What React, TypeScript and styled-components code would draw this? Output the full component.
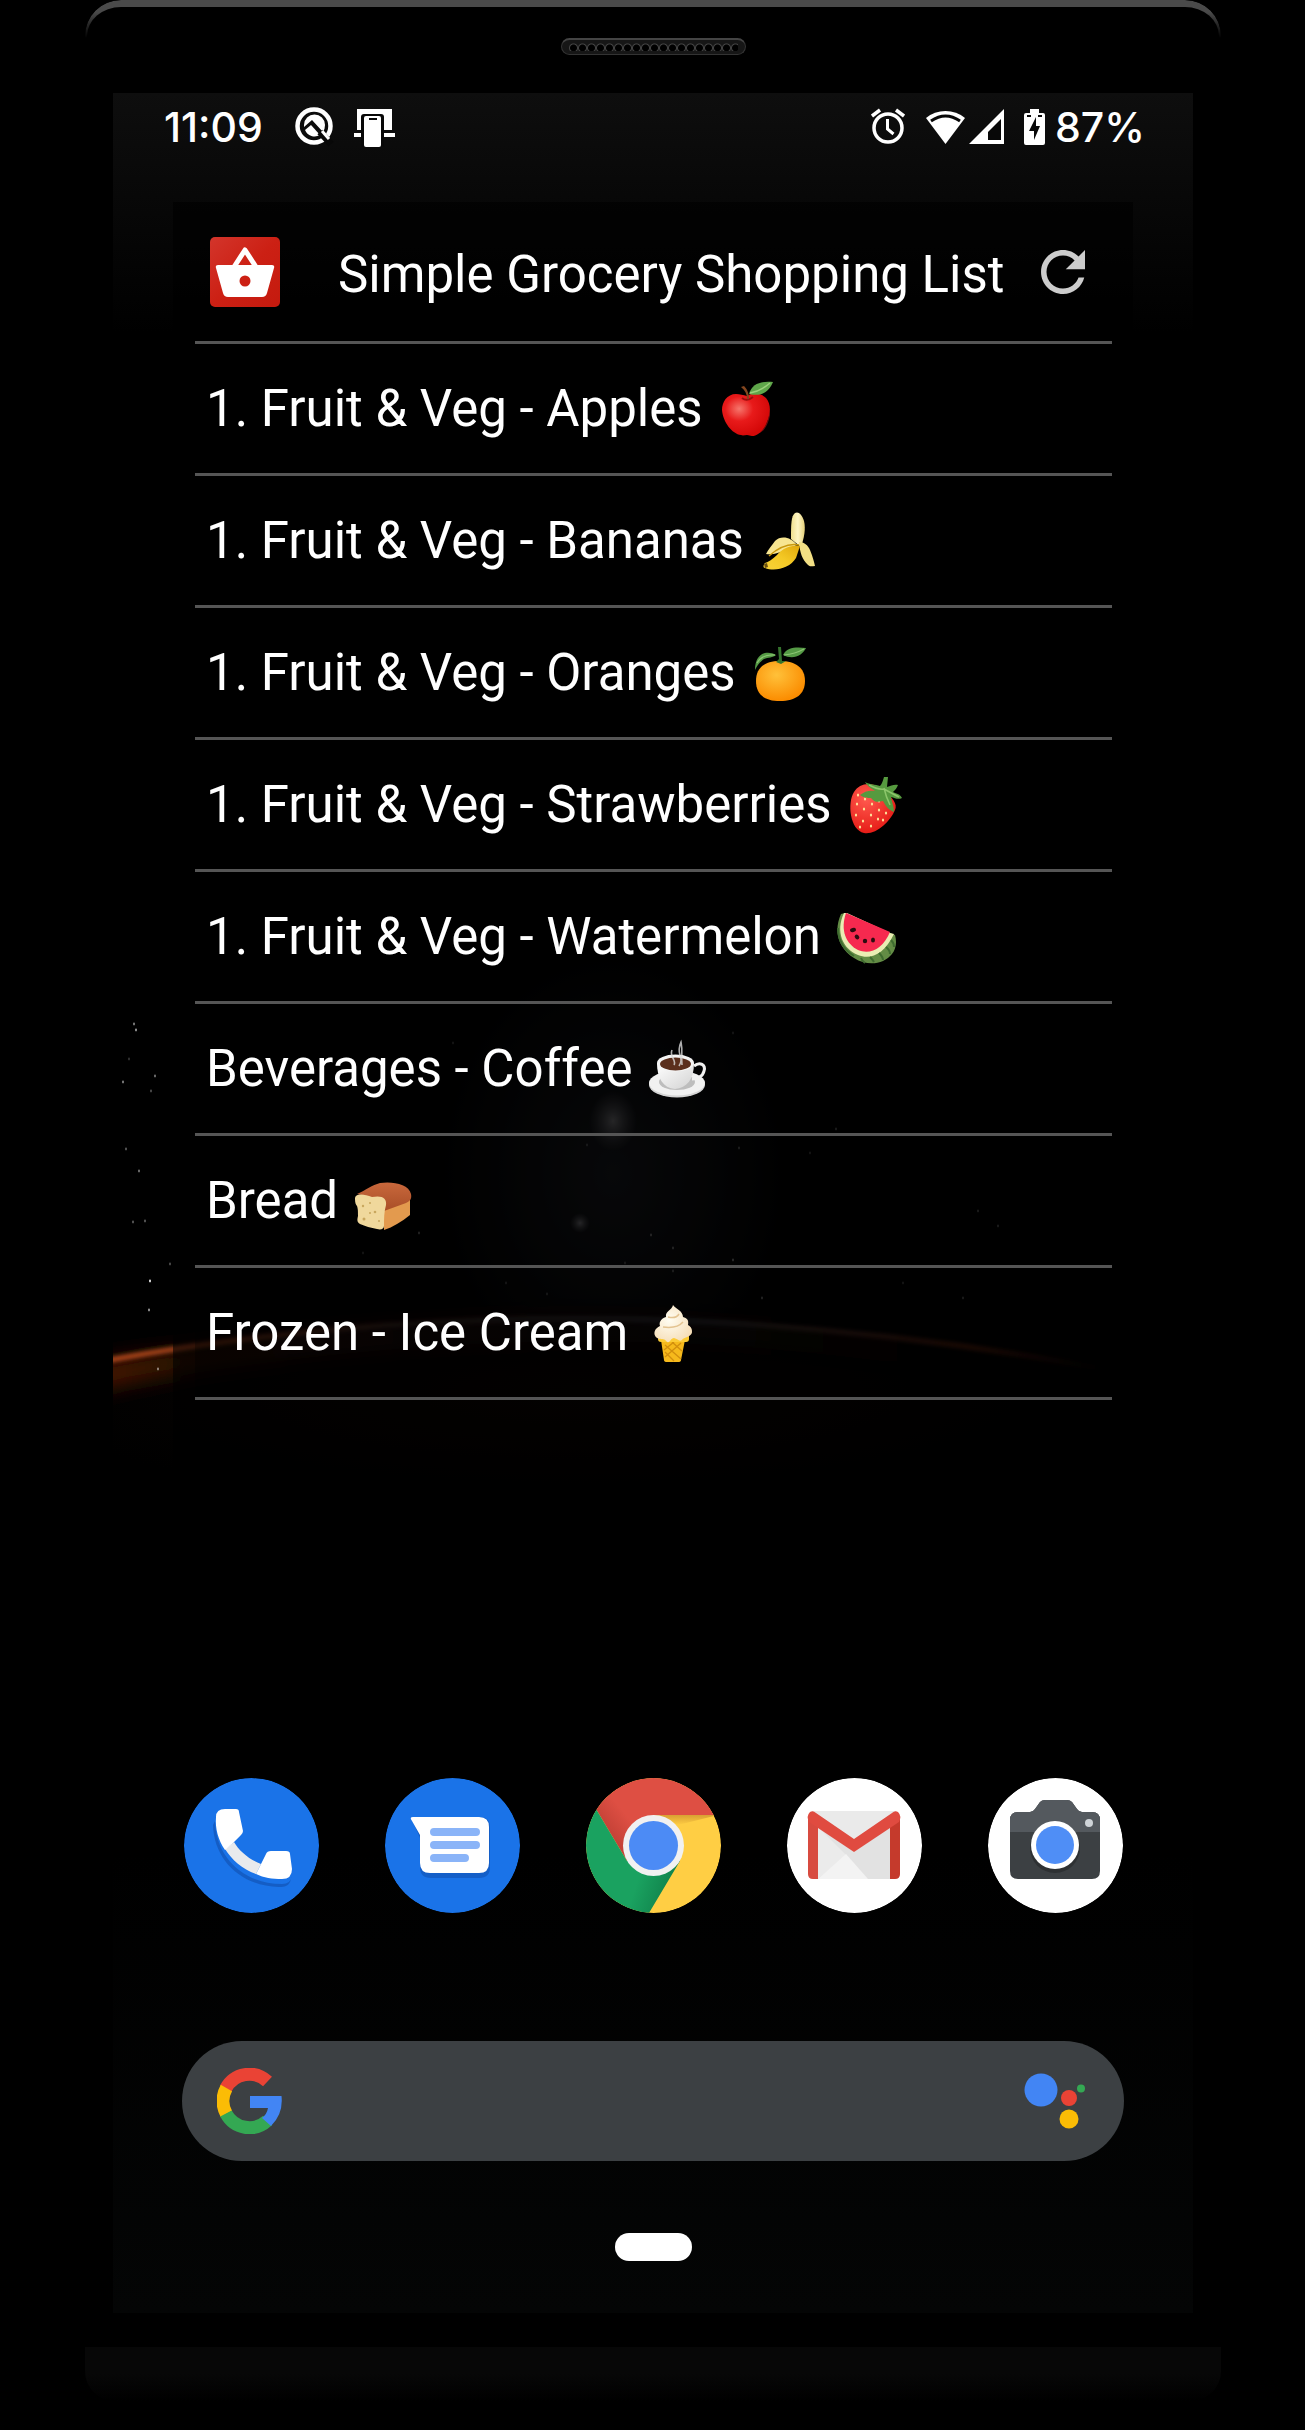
import React from "react";
import styled, { createGlobalStyle } from "styled-components";

const GlobalStyle = createGlobalStyle`
  *, *::before, *::after { box-sizing: border-box; }
  body {
    margin: 0;
    background: #000;
    color: #fff;
    font-family: Roboto, "Noto Sans", sans-serif;
  }
`;

/* ---------- device ---------- */

const Stage = styled.main`
  padding: 0 84px 0 85px;
  overflow: hidden;
`;

const Device = styled.div`
  display: flex;
  flex-direction: column;
`;

const TopBezel = styled.div`
  position: relative;
  height: 93px;
  padding-top: 38px;
  display: flex;
  justify-content: center;
  align-items: flex-start;

  &::before {
    content: "";
    position: absolute;
    inset: 0;
    height: 48px;
    border: 0 solid #4a4a4a;
    border-top-width: 7px;
    border-left-width: 2px;
    border-right-width: 2px;
    border-radius: 36px 36px 0 0;
    mask-image: linear-gradient(#000 12px, transparent 38px);
  }
`;

const Speaker = styled.div`
  width: 185px;
  height: 17px;
  padding: 3px 7px;
  border: 1px solid #333;
  border-top: 2px solid #444;
  border-radius: 9px;
  background: #161616;
`;

const SpeakerHoles = styled.div`
  height: 100%;
  background: radial-gradient(circle at 50% 45%, #000 3px, #444 4px, #161616 5px) 0 0 / 9px 11px repeat-x;
`;

const Screen = styled.section`
  position: relative;
  isolation: isolate;
  margin: 0 28px;
  padding-bottom: 52px;
  background: #000;
`;

const WallpaperArt = styled.svg`
  position: absolute;
  inset: 0;
  z-index: -1;
  width: 100%;
  height: 100%;
`;

const BottomBezel = styled.div`
  height: 54px;
  margin: 34px 0 29px;
  border-radius: 0 0 30px 30px;
  background: linear-gradient(#070707 50%, #000);
`;

/* ---------- status bar ---------- */

const StatusBar = styled.header`
  display: flex;
  justify-content: space-between;
  align-items: flex-start;
  height: 109px;
  padding: 10px 48px 0 51px;
`;

const StatusGroup = styled.div`
  display: flex;
  align-items: center;
  height: 48px;
`;

const StatusText = styled.span<{ $gap?: number }>`
  margin-left: ${(p) => p.$gap ?? 0}px;
  font-family: Inter, Roboto, sans-serif;
  font-size: 41px;
  font-weight: 500;
  line-height: 48px;
  white-space: nowrap;
`;

const StatusIcon = styled.svg<{ $w: number; $gap: number }>`
  flex: none;
  width: ${(p) => p.$w}px;
  height: 40px;
  margin-left: ${(p) => p.$gap}px;
`;

/* ---------- widget ---------- */

const Widget = styled.section`
  margin: 0 60px;
  padding: 0 21px 240px 22px;
  background: rgba(0, 0, 0, 0.6);
`;

const WidgetHeader = styled.div`
  display: flex;
  align-items: center;
  height: 139px;
  padding: 0 16px 0 15px;
`;

const AppBadge = styled.svg`
  flex: none;
  width: 70px;
  height: 70px;
`;

const WidgetTitle = styled.h1`
  flex: 1;
  margin: 6px 0 0 58px;
  font-size: 51px;
  font-weight: 400;
  line-height: 60px;
  white-space: nowrap;
`;

const RefreshButton = styled.button`
  flex: none;
  width: 66px;
  height: 66px;
  padding: 0;
  border: 0;
  background: none;
  color: #ccc;

  svg { display: block; width: 66px; height: 66px; }
`;

const Items = styled.ul`
  margin: 0;
  padding: 0;
  list-style: none;
  border-top: 3px solid #555;
  background: rgba(0, 0, 0, 0.3);
`;

const Item = styled.li`
  display: flex;
  align-items: center;
  height: 132px;
  padding: 0 11px;
  border-bottom: 3px solid #555;
  font-size: 51px;
  line-height: 60px;
  white-space: pre;
`;

const Emoji = styled.svg`
  flex: none;
  width: 64px;
  height: 64px;
`;

/* ---------- dock ---------- */

const Dock = styled.nav`
  display: flex;
  justify-content: space-between;
  margin: 138px 70px 0 71px;
`;

const DockButton = styled.button`
  width: 135px;
  height: 135px;
  padding: 0;
  border: 0;
  border-radius: 50%;
  overflow: hidden;
  background: none;

  svg { display: block; width: 100%; height: 100%; }
`;

const SearchBar = styled.label`
  display: flex;
  align-items: center;
  height: 120px;
  margin: 128px 69px 0;
  padding: 0 38px 0 35px;
  border-radius: 60px;
  background: #3c4043;
`;

const SearchIcon = styled.svg<{ $w: number }>`
  flex: none;
  width: ${(p) => p.$w}px;
  height: 66px;
`;

const SearchInput = styled.input`
  flex: 1;
  min-width: 0;
  height: 100%;
  margin: 0 24px;
  border: 0;
  outline: 0;
  background: transparent;
  color: #fff;
  font: 400 42px/60px Roboto, sans-serif;
`;

const HomeHandle = styled.button`
  display: block;
  width: 77px;
  height: 28px;
  margin: 72px auto 0;
  padding: 0;
  border: 0;
  border-radius: 14px;
  background: #fff;
`;

/* ---------- drawings ---------- */

const STARS: [number, number, number][] = [
  [21, 931, 0.5], [23, 937, 0.6], [16, 966, 0.2], [42, 983, 0.45], [10, 989, 0.5], [38, 998, 0.3],
  [13, 1056, 0.35], [26, 1078, 0.45], [32, 1128, 0.35], [20, 1129, 0.35], [57, 1171, 0.3], [37, 1188, 0.9],
  [36, 1217, 0.6], [45, 1276, 0.5], [620, 1167, 0.6], [474, 1052, 0.3], [626, 1055, 0.4], [538, 1142, 0.5],
  [560, 1155, 0.5], [306, 1140, 0.5], [697, 1060, 0.3], [865, 1118, 0.4], [885, 1133, 0.4], [723, 1036, 0.4],
  [512, 1170, 0.3], [560, 1178, 0.4], [434, 1201, 0.3], [649, 1205, 0.5], [393, 1190, 0.3], [790, 1190, 0.3],
  [340, 950, 0.3], [620, 940, 0.3], [250, 1160, 0.3], [850, 1205, 0.4],
];

const Wallpaper = () => (
  <WallpaperArt viewBox="0 0 1080 2220" preserveAspectRatio="none" aria-hidden="true">
    <defs>
      <linearGradient id="topFade" x1="0" y1="0" x2="0" y2="1">
        <stop offset="0" stopColor="#0e0e0e" />
        <stop offset="1" stopColor="#000" />
      </linearGradient>
      <linearGradient id="bottomFade" x1="0" y1="0" x2="0" y2="1">
        <stop offset="0" stopColor="#000" />
        <stop offset="1" stopColor="#040505" />
      </linearGradient>
      <radialGradient id="ground" cx="0.45" cy="0.3" r="0.5">
        <stop offset="0" stopColor="#0a0503" />
        <stop offset="1" stopColor="#000" />
      </radialGradient>
      <linearGradient id="rim" x1="0" y1="0" x2="1" y2="0">
        <stop offset="0" stopColor="#c24f1e" />
        <stop offset="0.1" stopColor="#a8431c" />
        <stop offset="0.3" stopColor="#45302a" />
        <stop offset="0.55" stopColor="#3a3a40" />
        <stop offset="0.8" stopColor="#6a2814" />
        <stop offset="0.92" stopColor="#000" />
      </linearGradient>
      <linearGradient id="rimGlow" x1="0" y1="0" x2="1" y2="0">
        <stop offset="0" stopColor="#5a1e06" />
        <stop offset="0.12" stopColor="#2c1006" />
        <stop offset="0.6" stopColor="#1a0d09" />
        <stop offset="0.9" stopColor="#000" />
      </linearGradient>
      <radialGradient id="haze">
        <stop offset="0" stopColor="#30333c" />
        <stop offset="1" stopColor="#30333c" stopOpacity="0" />
      </radialGradient>
      <radialGradient id="spot">
        <stop offset="0" stopColor="#88888c" />
        <stop offset="1" stopColor="#55555c" stopOpacity="0" />
      </radialGradient>
      <filter id="soft" x="-10%" y="-100%" width="120%" height="300%"><feGaussianBlur stdDeviation="2" /></filter>
      <filter id="softer" x="-10%" y="-100%" width="120%" height="300%"><feGaussianBlur stdDeviation="10" /></filter>
    </defs>
    <rect width="1080" height="240" fill="url(#topFade)" />
    <rect y="1760" width="1080" height="460" fill="url(#bottomFade)" />
    <ellipse cx="500" cy="1080" rx="190" ry="240" fill="url(#haze)" opacity="0.6" />
    <ellipse cx="500" cy="1028" rx="24" ry="30" fill="url(#spot)" />
    <circle cx="467" cy="1130" r="10" fill="url(#spot)" />
    <path d="M-40 1275Q495 1168 1080 1300V1460H-40Z" fill="url(#ground)" />
    <path d="M-40 1288Q495 1182 960 1290" fill="none" stroke="url(#rimGlow)" strokeWidth="26" filter="url(#softer)" />
    <path d="M-40 1274Q495 1168 1080 1294" fill="none" stroke="url(#rim)" strokeWidth="5" filter="url(#soft)" />
    {STARS.map(([x, y, o]) => (
      <ellipse key={`${x}-${y}`} cx={x} cy={y} rx="1" ry="1.4" fill="#fff" opacity={o} />
    ))}
  </WallpaperArt>
);

const AppleEmoji = () => (
  <Emoji viewBox="0 0 64 64" role="img" aria-label="red apple">
    <defs>
      <radialGradient id="apple" cx="0.36" cy="0.36" r="0.65">
        <stop offset="0" stopColor="#f6766c" /><stop offset="0.45" stopColor="#e81a1a" /><stop offset="1" stopColor="#d40808" />
      </radialGradient>
    </defs>
    <path d="M32 19c6-4 14-3 19 2 5 6 5 15 1 24-3 8-9 14-15 14-2 0-3-1-5-1s-4 1-6 0C17 57 8 45 7 33c0-8 5-16 14-16 4 0 7 1 11 2z" fill="url(#apple)" />
    <path d="M54 28c2 9-2 22-10 28 6-1 10-12 11-18 0-4 0-7-1-10z" fill="#a51616" opacity="0.65" />
    <path d="M27 21q5 4 11-1" stroke="#9c0d0d" strokeWidth="2" fill="none" />
    <path d="M32 22c0-5-2-9-6-12l3-1c3 3 5 7 5 13z" fill="#84461f" />
    <path d="M34 17C37 6 47 4 58 5 54 15 46 20 34 17z" fill="#5fa64a" />
    <path d="M35 16q11-2 20-10" stroke="#9bd07c" strokeWidth="1.5" fill="none" />
  </Emoji>
);

const BananaEmoji = () => (
  <Emoji viewBox="0 0 64 64" role="img" aria-label="banana">
    <defs>
      <linearGradient id="bananaPeel" x1="1" y1="0" x2="0" y2="1">
        <stop offset="0" stopColor="#e0a80c" /><stop offset="0.5" stopColor="#f4c925" /><stop offset="1" stopColor="#f8d23a" />
      </linearGradient>
      <linearGradient id="bananaFlesh" x1="0" y1="0" x2="1" y2="0">
        <stop offset="0" stopColor="#efdf8e" /><stop offset="0.5" stopColor="#fff6c4" /><stop offset="1" stopColor="#e5d07a" />
      </linearGradient>
    </defs>
    <path d="M34 30C34 16 34 7 38 4c3-2 7 1 9 8 2 8 0 17-3 26z" fill="url(#bananaFlesh)" />
    <path d="M42 33c5 0 9 3 11 8 3 7 4 12 5 16-3 0-5 1-7-1-6-6-8-12-9-23z" fill="#f2df84" />
    <path d="M40 36C34 28 24 26 18 32c-3 4-7 9-9 13 7 1 13-1 19-4z" fill="#f7e590" />
    <path d="M43 37c-9-1-17 2-23 9-4 4-9 7-12 8-2 2-2 5 0 5 10 4 25 0 31-10z" fill="url(#bananaPeel)" />
    <path d="M42 36C31 34 21 39 12 47" stroke="#c8980e" strokeWidth="1.5" fill="none" />
    <path d="M7 55l3-1 1 4-3 1z" fill="#6b5010" />
  </Emoji>
);

const OrangeEmoji = () => (
  <Emoji viewBox="0 0 64 64" role="img" aria-label="tangerine">
    <defs>
      <radialGradient id="orange" cx="0.42" cy="0.35" r="0.65">
        <stop offset="0" stopColor="#ffc13a" /><stop offset="1" stopColor="#fb8c00" />
      </radialGradient>
    </defs>
    <path d="M32 20c16 0 25 7 25 20S48 60 32 60 8 53 8 40s8-20 24-20z" fill="url(#orange)" />
    <path d="M28 14C20 9 7 11 7 29c3-6 5-8 9-11 4-2 9-1 12-4z" fill="#559a45" />
    <path d="M35 14c4-8 13-8 23-7-4 8-13 12-23 7z" fill="#559a45" />
    <path d="M36 14q11-1 20-6M27 14q-13-1-18 8" stroke="#8cc474" strokeWidth="1.2" fill="none" />
    <path d="M30 6h3l1 14h4l-5 3-5-2 3-3z" fill="#35732d" />
  </Emoji>
);

const SEEDS: [number, number][] = [
  [14, 22], [21, 26], [13, 31], [20, 36], [12, 42], [28, 31], [27, 42], [19, 48],
  [35, 37], [34, 46], [42, 40], [16, 54], [27, 53], [39, 47], [24, 20], [35, 28],
];

const StrawberryEmoji = () => (
  <Emoji viewBox="0 0 64 64" role="img" aria-label="strawberry">
    <defs>
      <radialGradient id="berry" cx="0.35" cy="0.3" r="0.8">
        <stop offset="0" stopColor="#ff5a4f" /><stop offset="1" stopColor="#e3140f" />
      </radialGradient>
    </defs>
    <path d="M10 19C16 9 30 8 40 18c8 6 14 13 11 19-5 12-19 25-31 23C6 57 3 30 10 19z" fill="url(#berry)" />
    <g fill="#ffe49a">
      {SEEDS.map(([x, y]) => (
        <ellipse key={`${x}-${y}`} cx={x} cy={y} rx="1.1" ry="1.5" />
      ))}
    </g>
    <path d="M16 22c5-4 9-5 15-4-4-3-7-4-10-9 5 3 10 2 15 4 2-2 3-6 4-9h4l-1 10c4-1 7-3 11-2-1 3-3 5-5 7 4 2 7 2 9 6-4 2-7 0-11-1 1 6 3 9 3 15-5-2-8-5-11-11-5 1-8 2-12-3-3 0-7 0-11-3z" fill="#569a3f" />
    <path d="M25 12q9 5 15 4 9 5 15 8M40 15q2 9 6 17" stroke="#8cc66b" strokeWidth="1.5" fill="none" />
  </Emoji>
);

const WatermelonEmoji = () => (
  <Emoji viewBox="0 0 64 64" role="img" aria-label="watermelon">
    <path d="M7 9C-1 27 5 44 20 53c14 9 30 6 38-4 4-5 5-12 3-19L11 8z" fill="#638c45" />
    <path d="M10 8C1 27 9 44 24 50c12 5 26 0 36-21l-4-1L13 8z" fill="#e9edb3" />
    <path d="M12 8C6 25 12 39 24 45c12 5 25-1 32-18z" fill="#f6294f" />
    <g stroke="#3f6c30" strokeWidth="2" fill="none">
      <path d="M4 23q0 18 16 28M27 53q1 3 4 5M36 52q3 3 4 5M45 48q4 4 4 7M52 42q4 3 4 7M57 35q3 3 3 7" />
    </g>
    <g fill="#2c0c10">
      <ellipse cx="19" cy="25" rx="3" ry="2" transform="rotate(-15 19 25)" />
      <ellipse cx="23" cy="32" rx="2.6" ry="2" transform="rotate(45 23 32)" />
      <ellipse cx="31" cy="36" rx="2.2" ry="2.2" />
      <ellipse cx="39" cy="35" rx="2" ry="2.6" />
    </g>
  </Emoji>
);

const CoffeeEmoji = () => (
  <Emoji viewBox="0 0 64 64" role="img" aria-label="hot beverage">
    <defs>
      <linearGradient id="cup" x1="0" y1="0" x2="1" y2="1">
        <stop offset="0" stopColor="#fff" /><stop offset="1" stopColor="#d2d2d2" />
      </linearGradient>
    </defs>
    <ellipse cx="32" cy="48" rx="28" ry="12.5" fill="#d5d5d5" />
    <ellipse cx="32" cy="46" rx="28" ry="12.5" fill="#f1f1f1" />
    <ellipse cx="32" cy="45" rx="18" ry="8" fill="#bdbdbd" />
    <path d="M49 29c6-5 12-1 10 5-1 6-8 8-12 8" stroke="#f1f1f1" strokeWidth="3" fill="none" />
    <path d="M12 26c0 15 6 25 18 26 12-1 19-10 19-26z" fill="url(#cup)" />
    <ellipse cx="30.5" cy="26" rx="18.5" ry="8.5" fill="#f4f4f4" />
    <ellipse cx="30.5" cy="27" rx="15.5" ry="6.5" fill="#5b2f1d" />
    <path d="M29 28c3-5-5-8-2-15M34 29c6-9-4-11 2-24 2 10 0 13 1 23" stroke="#d9d9d9" strokeWidth="1.6" fill="none" opacity="0.8" />
  </Emoji>
);

const BreadEmoji = () => (
  <Emoji viewBox="0 0 64 64" role="img" aria-label="bread">
    <defs>
      <linearGradient id="crust" x1="0" y1="0" x2="0" y2="1">
        <stop offset="0" stopColor="#c9683c" /><stop offset="1" stopColor="#a94e27" />
      </linearGradient>
    </defs>
    <path d="M33 36L59 29v17c-9 7-17 12-26 15z" fill="#e39a4e" />
    <path d="M6 25C15 21 21 16 29 14c12-2 29 1 31 11 1 5-1 7-5 9L33 42c0-8-6-13-27-17z" fill="url(#crust)" />
    <path d="M4 30c0-6 9-5 17-2 10-2 15 1 14 8-2 7-2 14-2 21 0 3-3 4-7 3-6-1-12-3-17-5-3-2-3-4-2-8 0-5 0-7-1-10-1-1-2-3-2-7z" fill="#f0d89c" />
    <g fill="#c9a75e"><circle cx="12" cy="37" r="1.2" /><circle cx="19" cy="34" r="1" /><circle cx="24" cy="43" r="1.3" /><circle cx="13" cy="50" r="1.5" /><circle cx="28" cy="52" r="1" /><circle cx="19" cy="44" r="1" /></g>
  </Emoji>
);

const IceCreamEmoji = () => (
  <Emoji viewBox="0 0 64 64" role="img" aria-label="soft ice cream">
    <defs>
      <radialGradient id="cream" cx="0.4" cy="0.4" r="0.7">
        <stop offset="0" stopColor="#fffdf2" /><stop offset="1" stopColor="#f5dcb4" />
      </radialGradient>
    </defs>
    <path d="M20 39h24l-4 20q0 2-3 2H26q-3 0-3-2z" fill="#f6b91c" />
    <path d="M24 44l16 14M31 41l10 9M40 42L24 56M33 41l-10 8M24 51l9 9" stroke="#d28e0d" strokeWidth="1.3" />
    <path d="M17 32h31v6q0 3-3 3H20q-3 0-3-3z" fill="#fccb35" />
    <path d="M32 4c-1 5-8 6-7 12-6 2-7 6-6 9-5 2-8 8-3 12 4 2 7 0 9 3 4 4 4-3 8-3 4 1 5 4 8 2 1-3 11-3 10-9 0-3-2-5-4-6 1-5-1-7-5-8 0-6-7-8-10-12z" fill="url(#cream)" />
    <path d="M22 26q14 2 20-5M27 16q8 2 11-3" stroke="#e3c391" strokeWidth="1.5" fill="none" />
  </Emoji>
);

const PhoneIcon = () => (
  <svg viewBox="0 0 135 135" aria-hidden="true">
    <circle cx="67.5" cy="67.5" r="67.5" fill="#1a73e8" />
    <path d="M31 43c1 38 30 63 67 63 6 0 9-3 10-8l-2 6c-2 4-5 5-11 5-38-1-65-27-66-62z" fill="#0d47a1" opacity="0.5" />
    <path d="M50 64C55 73 66 82 77 86L72 96C58 91 48 82 41 71z" fill="#e8eaed" />
    <path d="M32 39q0-8 9-8h11q3 0 3 3l4 19q0 2-2 4L50 64 41 72C34 62 31 50 32 39z" fill="#fff" />
    <path d="M72 96l5-10 5-10q1-3 5-3h15q4 0 4 3l2 15q0 10-10 10c-10 0-18-1-26-5z" fill="#fff" />
  </svg>
);

const MessagesIcon = () => (
  <svg viewBox="0 0 135 135" aria-hidden="true">
    <circle cx="67.5" cy="67.5" r="67.5" fill="#1a73e8" />
    <path d="M28 44q-4-5 1-5h66q10 0 10 10v40q0 11-11 11H46q-11 0-11-11V60z" fill="#0d47a1" opacity="0.45" />
    <path d="M27 43q-3-4 1-4h66q10 0 10 10v36q0 10-10 10H45q-10 0-10-10V57z" fill="#fff" />
    <path d="M49 54h42M49 67h42M49 80h31" stroke="#8ab4f8" strokeWidth="8" strokeLinecap="round" />
  </svg>
);

const ChromeIcon = () => (
  <svg viewBox="0 0 135 135" aria-hidden="true">
    <defs>
      <clipPath id="disc"><circle cx="67.5" cy="67.5" r="67.5" /></clipPath>
      <linearGradient id="redShade" x1="0" y1="0.6" x2="0.3" y2="0.45"><stop offset="0" stopColor="#b53a30" /><stop offset="1" stopColor="#de4f43" /></linearGradient>
      <linearGradient id="greenShade" x1="1" y1="0.7" x2="0.6" y2="0.55"><stop offset="0" stopColor="#0f7d48" /><stop offset="1" stopColor="#1aa260" /></linearGradient>
      <linearGradient id="yellowShade" x1="0" y1="0" x2="0" y2="1"><stop offset="0" stopColor="#d9a032" /><stop offset="1" stopColor="#ffce44" /></linearGradient>
    </defs>
    <g clipPath="url(#disc)">
      <rect width="135" height="135" fill="#ffce44" />
      <path d="M67 37h65L92 47z" fill="url(#yellowShade)" />
      <path d="M0 0h135v37H67.5v31L41 83 10 31z" fill="url(#redShade)" />
      <path d="M10 31l31 52 26-15 27 15-31 52H0V31z" fill="url(#greenShade)" />
    </g>
    <circle cx="67.5" cy="67.5" r="30.5" fill="#f1f1f1" />
    <circle cx="67.5" cy="67.5" r="24.5" fill="#4c8bf5" />
  </svg>
);

const GmailIcon = () => (
  <svg viewBox="0 0 135 135" aria-hidden="true">
    <circle cx="67.5" cy="67.5" r="67.5" fill="#fff" />
    <path d="M25 33h84v68H25z" fill="#eaeaea" />
    <path d="M31 49l36 25 36-25v52H31z" fill="#e2e2e2" />
    <path d="M31 49l28 28-28 24z" fill="#ebebeb" />
    <path d="M31 101l28-25 22 25z" fill="#f3f3f3" />
    <path d="M21 40l10 9v52h-5q-5 0-5-5z" fill="#d84b40" />
    <path d="M113 40l-10 9v52h5q5 0 5-5z" fill="#c53a2c" />
    <path d="M23 34q3-2 6 1l38 26 38-26q3-3 6-1 4 4 1 10L67 74 22 44q-3-6 1-10z" fill="#e04b40" />
  </svg>
);

const CameraIcon = () => (
  <svg viewBox="0 0 135 135" aria-hidden="true">
    <circle cx="67.5" cy="67.5" r="67.5" fill="#fff" />
    <path d="M30 34h12q3 0 5-3l5-7q2-2 5-2h22q3 0 5 2l5 7q2 3 5 3h10q8 0 8 8v51q0 8-8 8H30q-8 0-8-8V42q0-8 8-8z" fill="#3c4043" />
    <path d="M30 34h12q3 0 5-3l5-7q2-2 5-2h22q3 0 5 2l5 7q2 3 5 3h10q8 0 8 8v12H22V42q0-8 8-8z" fill="#54595e" />
    <circle cx="67" cy="70" r="25" fill="#25282a" opacity="0.6" />
    <circle cx="67" cy="67" r="24" fill="#fff" />
    <circle cx="67" cy="67" r="19" fill="#4f8ef6" />
    <circle cx="101" cy="45" r="4" fill="#cfd4d8" />
  </svg>
);

const ITEMS: { text: string; Art: React.FC }[] = [
  { text: "1. Fruit & Veg - Apples ", Art: AppleEmoji },
  { text: "1. Fruit & Veg - Bananas ", Art: BananaEmoji },
  { text: "1. Fruit & Veg - Oranges ", Art: OrangeEmoji },
  { text: "1. Fruit & Veg - Strawberries ", Art: StrawberryEmoji },
  { text: "1. Fruit & Veg - Watermelon ", Art: WatermelonEmoji },
  { text: "Beverages - Coffee ", Art: CoffeeEmoji },
  { text: "Bread ", Art: BreadEmoji },
  { text: "Frozen - Ice Cream ", Art: IceCreamEmoji },
];

const APPS: { name: string; Art: React.FC }[] = [
  { name: "Phone", Art: PhoneIcon },
  { name: "Messages", Art: MessagesIcon },
  { name: "Chrome", Art: ChromeIcon },
  { name: "Gmail", Art: GmailIcon },
  { name: "Camera", Art: CameraIcon },
];

export default function App() {
  return (
    <Stage>
      <GlobalStyle />
      <Device>
        <TopBezel>
          <Speaker><SpeakerHoles /></Speaker>
        </TopBezel>

        <Screen>
          <Wallpaper />

          <StatusBar>
            <StatusGroup>
              <StatusText>11:09</StatusText>
              <StatusIcon $w={40} $gap={31} viewBox="0 0 40 40" aria-hidden="true">
                <circle cx="20" cy="19" r="16.5" fill="none" stroke="#fff" strokeWidth="4.5" />
                <path d="M10 18a10.5 10.5 0 0 1 21 0q0 4-2 7L18 13l-8 7z" fill="#fff" />
                <path d="M11 23l6-5 9 10a10.5 10.5 0 0 1-15-5z" fill="#fff" />
                <path d="M26 25l11 12" stroke="#080808" strokeWidth="7" />
                <path d="M28 24l7 8" stroke="#fff" strokeWidth="3" />
              </StatusIcon>
              <StatusIcon $w={42} $gap={20} viewBox="0 0 42 40" aria-hidden="true">
                <path d="M3 2h35v21H3zM0 26h41v4H0z" fill="#fff" />
                <rect x="7" y="7" width="23" height="33" rx="3" fill="#080808" />
                <rect x="10" y="9" width="17" height="31" rx="2" fill="#fff" />
                <path d="M15 11h8v2h-8z" fill="#080808" />
              </StatusIcon>
            </StatusGroup>
            <StatusGroup>
              <StatusIcon $w={34} $gap={0} viewBox="0 0 34 40" aria-hidden="true">
                <circle cx="17" cy="21" r="14" fill="none" stroke="#fff" strokeWidth="3.5" />
                <path d="M16.5 12v10l6 5" fill="none" stroke="#fff" strokeWidth="3" />
                <path d="M1 9l8-6M33 9l-8-6" stroke="#fff" strokeWidth="3.5" />
              </StatusIcon>
              <StatusIcon $w={41} $gap={20} viewBox="0 0 41 40" aria-hidden="true">
                <path d="M20.5 37L1 11a31 31 0 0 1 39 0z" fill="#fff" />
                <path d="M6 14q14.5-10 29 0" fill="none" stroke="#080808" strokeWidth="3" />
              </StatusIcon>
              <StatusIcon $w={35} $gap={3} viewBox="0 0 35 40" aria-hidden="true">
                <path d="M35 2v35H0z" fill="#fff" />
                <path d="M32 12v21H19V25z" fill="#080808" />
              </StatusIcon>
              <StatusIcon $w={21} $gap={20} viewBox="0 0 21 40" aria-hidden="true">
                <path d="M6 2h9v4h4q2 0 2 2v28q0 2-2 2H2q-2 0-2-2V8q0-2 2-2h4z" fill="#fff" />
                <path d="M12 10L5 24h5v9l6-14h-4z" fill="#080808" />
                <path d="M3 9h15" stroke="#080808" strokeWidth="2" strokeDasharray="4 7 4" />
              </StatusIcon>
              <StatusText $gap={10}>87%</StatusText>
            </StatusGroup>
          </StatusBar>

          <Widget>
            <WidgetHeader>
              <AppBadge viewBox="0 0 70 70" aria-hidden="true">
                <defs>
                  <linearGradient id="badge" x1="0" y1="0" x2="1" y2="1">
                    <stop offset="0" stopColor="#d3352b" /><stop offset="0.5" stopColor="#cc2014" /><stop offset="1" stopColor="#c41a0e" />
                  </linearGradient>
                </defs>
                <rect width="70" height="70" rx="5" fill="url(#badge)" />
                <path d="M24 30l11-17 11 17" fill="none" stroke="#fff" strokeWidth="5" strokeLinejoin="round" />
                <path d="M8 28h54q3 0 2 3l-7 25q-1 4-5 4H18q-4 0-5-4L6 31q-1-3 2-3z" fill="#fff" />
                <circle cx="35" cy="44" r="5.5" fill="#cc2014" />
              </AppBadge>
              <WidgetTitle>Simple Grocery Shopping List</WidgetTitle>
              <RefreshButton type="button" aria-label="Refresh">
                <svg viewBox="0 0 24 24" fill="currentColor" aria-hidden="true">
                  <path d="M17.65 6.35C16.2 4.9 14.21 4 12 4c-4.42 0-7.99 3.58-7.99 8s3.57 8 7.99 8c3.73 0 6.84-2.55 7.73-6h-2.08c-.82 2.33-3.04 4-5.65 4-3.31 0-6-2.69-6-6s2.69-6 6-6c1.66 0 3.14.69 4.22 1.78L13 11h7V4l-2.35 2.35z" />
                </svg>
              </RefreshButton>
            </WidgetHeader>
            <Items>
              {ITEMS.map(({ text, Art }) => (
                <Item key={text}>
                  <span>{text}</span>
                  <Art />
                </Item>
              ))}
            </Items>
          </Widget>

          <Dock aria-label="Favourite apps">
            {APPS.map(({ name, Art }) => (
              <DockButton key={name} type="button" aria-label={name}>
                <Art />
              </DockButton>
            ))}
          </Dock>

          <SearchBar>
            <SearchIcon $w={66} viewBox="0 0 66 66" aria-hidden="true">
              <g fill="none" strokeWidth="13">
                <path d="M8.8 20.5A26.5 26.5 0 0 1 50.5 13.5" stroke="#ea4335" />
                <path d="M9.4 46A26.5 26.5 0 0 1 9.4 20" stroke="#fbbc05" />
                <path d="M50.5 52.5A26.5 26.5 0 0 1 9 45.5" stroke="#34a853" />
              </g>
              <path d="M33 28h31.5q2 18-10.5 30L45 50q5-4 6-10H33z" fill="#4285f4" />
            </SearchIcon>
            <SearchInput type="text" aria-label="Search" />
            <SearchIcon $w={62} viewBox="0 0 62 66" aria-hidden="true">
              <circle cx="17" cy="22" r="16.5" fill="#4285f4" />
              <circle cx="45" cy="30" r="8" fill="#ea4335" />
              <circle cx="45" cy="51" r="9.5" fill="#fbbc05" />
              <circle cx="57" cy="20.5" r="4" fill="#34a853" />
            </SearchIcon>
          </SearchBar>

          <HomeHandle type="button" aria-label="Home" />
        </Screen>

        <BottomBezel />
      </Device>
    </Stage>
  );
}
